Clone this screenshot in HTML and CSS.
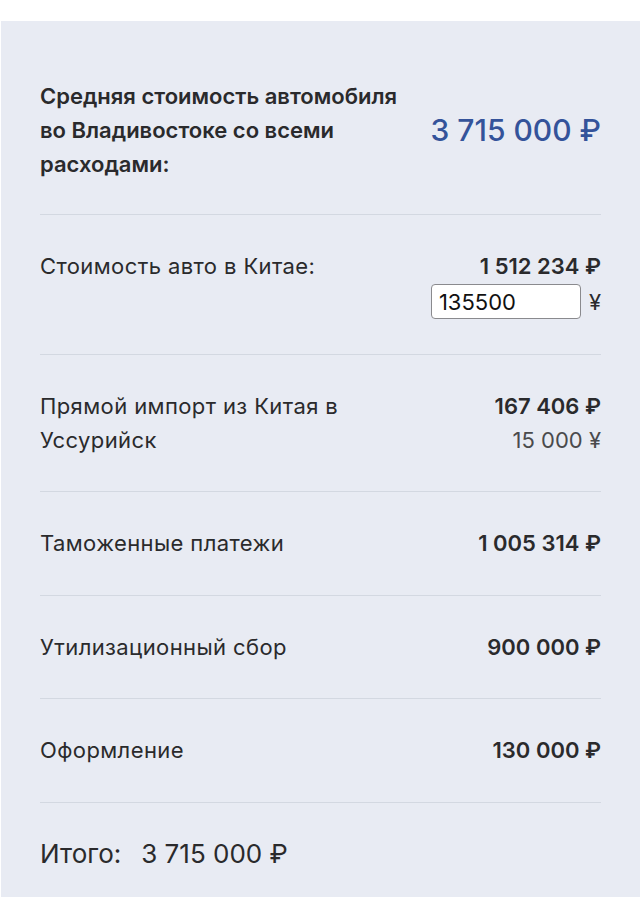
FILE: index.html
```html
<!DOCTYPE html>
<html lang="ru">
<head>
<meta charset="utf-8">
<title>Калькулятор</title>
<link rel="stylesheet" href="styles.css">
</head>
<body>
<div class="panel">
  <div class="summary">
    <div class="summary-title">Средняя стоимость автомобиля во Владивостоке со всеми расходами:</div>
    <div class="summary-price">3 715 000 ₽</div>
  </div>
  <div class="row">
    <div class="label">Стоимость авто в Китае:</div>
    <div class="values">
      <div class="value">1 512 234 ₽</div>
      <div class="input-group">
        <input class="yuan-input" type="text" value="135500">
        <span class="yuan">¥</span>
      </div>
    </div>
  </div>
  <div class="row">
    <div class="label label-narrow">Прямой импорт из Китая в Уссурийск</div>
    <div class="values">
      <div class="value">167 406 ₽</div>
      <div class="sub">15 000 ¥</div>
    </div>
  </div>
  <div class="row">
    <div class="label">Таможенные платежи</div>
    <div class="values"><div class="value">1 005 314 ₽</div></div>
  </div>
  <div class="row">
    <div class="label">Утилизационный сбор</div>
    <div class="values"><div class="value">900 000 ₽</div></div>
  </div>
  <div class="row">
    <div class="label">Оформление</div>
    <div class="values"><div class="value">130 000 ₽</div></div>
  </div>
  <div class="total">
    <span class="total-label">Итого:</span>
    <span class="total-value">3 715 000 ₽</span>
  </div>
</div>
</body>
</html>
```
FILE: styles.css
```css
* { box-sizing: border-box; }
html, body { margin: 0; padding: 0; background: #ffffff; }
body {
  font-family: Inter, "Noto Sans", "Liberation Sans", sans-serif;
  color: #2a2a2c;
  overflow: hidden;
}
.panel {
  margin: 21px 0 0 1px;
  background: #e8ebf3;
  padding: 0 39px;
  min-height: 876px;
}
.summary {
  display: flex;
  justify-content: space-between;
  align-items: center;
  padding: 58px 0 33px;
}
.summary-title {
  font-size: 22px;
  font-weight: 600;
  line-height: 34px;
  max-width: 380px;
  color: #2a2a2c;
}
.summary-price {
  font-size: 30px;
  font-weight: 500;
  color: #34539a;
  white-space: nowrap;
}
.row {
  display: flex;
  justify-content: space-between;
  align-items: flex-start;
  border-top: 1px solid #d3d8e1;
  padding: 34px 0 34.5px;
}
.label {
  font-size: 22px;
  line-height: 34px;
  font-weight: 400;
  letter-spacing: 0.4px;
}
.label-narrow { max-width: 330px; }
.values {
  display: flex;
  flex-direction: column;
  align-items: flex-end;
}
.value {
  font-size: 22px;
  line-height: 34px;
  font-weight: 600;
  white-space: nowrap;
}
.sub {
  font-size: 22px;
  line-height: 34px;
  font-weight: 400;
  color: #4a4a4c;
  white-space: nowrap;
}
.input-group {
  display: flex;
  align-items: center;
  gap: 8px;
  margin-top: 1px;
}
.yuan-input {
  width: 150px;
  height: 35px;
  border: 1px solid #8a8a8e;
  border-radius: 4px;
  background: #ffffff;
  font-family: Inter, "Noto Sans", "Liberation Sans", sans-serif;
  font-size: 22px;
  color: #111;
  padding: 0 7px;
  outline: none;
}
.yuan {
  font-size: 22px;
  color: #2a2a2c;
}
.total {
  border-top: 1px solid #d3d8e1;
  padding: 34px 0 20px;
  display: flex;
  align-items: center;
  gap: 20px;
  font-size: 26px;
  line-height: 34px;
  font-weight: 400;
  color: #2a2a2c;
}
```
